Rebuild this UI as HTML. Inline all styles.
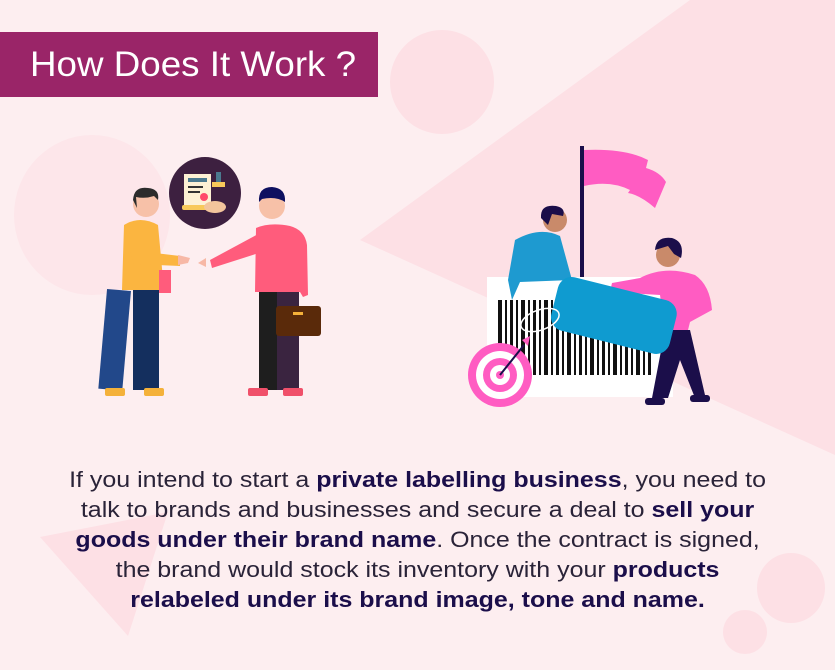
<!DOCTYPE html>
<html><head><meta charset="utf-8"><style>
html,body{margin:0;padding:0}
body{width:835px;height:670px;overflow:hidden;background:#fdeef0;position:relative;font-family:"Liberation Sans",sans-serif}
svg.bg{position:absolute;left:0;top:0}
.title{position:absolute;left:0;top:32px;width:378px;height:65px;background:#9a2568;color:#fff;font-size:35px;line-height:65px;padding-left:30px;box-sizing:border-box;white-space:nowrap}
.title span{display:inline-block;transform:scaleX(1.05);transform-origin:left center}
.txt{position:absolute;left:0;width:835px;top:465px;text-align:center;font-size:22.5px;line-height:30px;color:#2a2338;white-space:nowrap;transform:scaleX(1.11);transform-origin:417px 0}
.txt b{color:#1b0e4a}
</style></head><body>
<svg class="bg" width="835" height="670" viewBox="0 0 835 670">
<polygon points="360,240 690,0 835,0 835,455" fill="#fde0e5"/>
<circle cx="442" cy="82" r="52" fill="#fde0e5"/>
<ellipse cx="92" cy="215" rx="78" ry="80" fill="#fde6ea"/>
<polygon points="40,537 168,512 128,636" fill="#fde0e5"/>
<ellipse cx="791" cy="588" rx="34" ry="35" fill="#fde0e5"/>
<ellipse cx="745" cy="632" rx="22" ry="22" fill="#fde0e5"/>

<circle cx="205" cy="193" r="36" fill="#3d2040"/>
<rect x="184" y="174" width="27" height="34" fill="#fdf1d4"/>
<rect x="188" y="178" width="19" height="4" fill="#4b7a8f"/>
<rect x="188" y="186" width="15" height="2" fill="#333"/>
<rect x="188" y="191" width="12" height="2" fill="#333"/>
<circle cx="204" cy="197" r="4" fill="#ff4a6a"/>
<rect x="182" y="205" width="30" height="5" rx="2" fill="#f8c95a"/>
<rect x="216" y="172" width="5" height="10" fill="#4b7a8f"/>
<rect x="212" y="182" width="13" height="5" fill="#f8c95a"/>
<ellipse cx="215" cy="207" rx="11" ry="6" fill="#f3c59c"/>

<rect x="107" y="290" width="24" height="100" fill="#22488a" transform="rotate(5 119 290)"/>
<rect x="133" y="288" width="26" height="102" fill="#142f5e"/>
<rect x="105" y="388" width="20" height="8" rx="2" fill="#f4b13a"/>
<rect x="144" y="388" width="20" height="8" rx="2" fill="#f4b13a"/>
<path d="M124 225 Q140 215 158 225 L164 290 L122 290 Z" fill="#fbb540"/>
<path d="M130 250 L180 256 L180 266 L134 264 Z" fill="#fbb540"/>
<rect x="159" y="270" width="12" height="23" fill="#ff5c7c"/>
<path d="M178 255 l12 3 -2 5 -10 2z" fill="#f7b8a6"/>
<circle cx="146" cy="204" r="13" fill="#f7c1a8"/>
<path d="M133 200 Q134 186 148 188 Q160 189 158 200 L154 196 Q145 199 136 197 L137 208 Z" fill="#2c2c2c"/>

<rect x="259" y="290" width="18" height="100" fill="#1e1e1e"/>
<rect x="277" y="290" width="22" height="100" fill="#3a2440"/>
<rect x="248" y="388" width="20" height="8" rx="2" fill="#f0506a"/>
<rect x="283" y="388" width="20" height="8" rx="2" fill="#f0506a"/>
<path d="M256 228 Q270 222 290 226 Q305 230 307 245 L308 295 L303 297 L300 292 L255 292 Z" fill="#ff5c7c"/>
<path d="M262 232 L210 260 L212 268 L262 252 Z" fill="#ff5c7c"/>
<path d="M206 258 l-8 5 8 4z" fill="#f7b8a6"/>
<rect x="276" y="306" width="45" height="30" rx="3" fill="#5a2a0a"/>
<rect x="293" y="312" width="10" height="3" fill="#f4b13a"/>
<circle cx="272" cy="206" r="13" fill="#f7c1a8"/>
<path d="M259 202 Q258 187 272 187 Q286 188 285 202 Q276 196 262 199 Z" fill="#0e1060"/>

<rect x="487" y="277" width="186" height="120" fill="#fff"/>
<g fill="#111">
<rect x="498" y="300" width="4" height="75"/><rect x="505" y="300" width="2" height="75"/><rect x="510" y="300" width="3" height="75"/><rect x="516" y="300" width="2" height="75"/><rect x="521" y="300" width="4" height="75"/><rect x="528" y="300" width="2" height="75"/><rect x="533" y="300" width="3" height="75"/><rect x="539" y="300" width="2" height="75"/><rect x="544" y="300" width="4" height="75"/><rect x="551" y="300" width="2" height="75"/><rect x="556" y="300" width="3" height="75"/><rect x="562" y="300" width="2" height="75"/><rect x="567" y="300" width="4" height="75"/><rect x="574" y="300" width="2" height="75"/><rect x="579" y="300" width="3" height="75"/><rect x="585" y="300" width="2" height="75"/><rect x="590" y="300" width="4" height="75"/><rect x="597" y="300" width="2" height="75"/><rect x="602" y="300" width="3" height="75"/><rect x="608" y="300" width="2" height="75"/><rect x="613" y="300" width="4" height="75"/><rect x="620" y="300" width="2" height="75"/><rect x="625" y="300" width="3" height="75"/><rect x="631" y="300" width="2" height="75"/><rect x="636" y="300" width="4" height="75"/><rect x="643" y="300" width="2" height="75"/><rect x="648" y="300" width="3" height="75"/>
</g>
<rect x="580" y="146" width="4" height="131" fill="#1b0e4a"/>
<path d="M584 150 Q625 148 648 160 L646 168 Q660 172 666 182 L655 208 Q640 195 628 193 L630 190 Q610 180 584 186 Z" fill="#ff5cc2"/>
<path d="M515 240 Q540 226 560 236 L572 280 L520 282 L512 300 L508 280 Z" fill="#1e9ad0"/>
<circle cx="555" cy="220" r="12" fill="#c98a6a"/>
<path d="M541 218 Q540 204 556 206 Q566 208 563 216 L552 214 L548 225 Z" fill="#1b0e4a"/>
<path d="M640 278 Q665 265 695 275 Q710 285 712 310 L690 322 L688 330 L665 330 L660 295 L610 292 L612 283 Z" fill="#ff5cc2"/>
<path d="M665 330 L690 330 L705 395 L695 398 L680 360 L668 398 L652 398 Z" fill="#1b0e4a"/>
<rect x="645" y="398" width="20" height="7" rx="3" fill="#1b0e4a"/>
<rect x="690" y="395" width="20" height="7" rx="3" fill="#1b0e4a"/>
<circle cx="668" cy="255" r="12" fill="#c98a6a"/>
<path d="M655 250 Q656 236 672 238 Q685 242 681 258 L674 254 L668 246 Z" fill="#1b0e4a"/>
<rect x="553" y="288" width="122" height="55" rx="14" fill="#0f9bd0" transform="rotate(14 614 315)"/>
<ellipse cx="540" cy="320" rx="20" ry="10" fill="none" stroke="#fff" stroke-width="1.5" transform="rotate(-20 540 320)"/>
<circle cx="500" cy="375" r="32" fill="#ff5cc2"/>
<circle cx="500" cy="375" r="24" fill="#fff"/>
<circle cx="500" cy="375" r="17" fill="#ff5cc2"/>
<circle cx="500" cy="375" r="10" fill="#fff"/>
<circle cx="500" cy="375" r="4" fill="#ff5cc2"/>
<line x1="500" y1="375" x2="524" y2="345" stroke="#1b0e4a" stroke-width="2"/>
<path d="M522 340 l8 -4 -2 10z" fill="#ff5cc2"/>
</svg>
<div class="title"><span>How Does It Work ?</span></div>
<div class="txt">If you intend to start a <b>private labelling business</b>, you need to<br>talk to brands and businesses and secure a deal to <b>sell your</b><br><b>goods under their brand name</b>. Once the contract is signed,<br>the brand would stock its inventory with your <b>products</b><br><b>relabeled under its brand image, tone and name.</b></div>
</body></html>
